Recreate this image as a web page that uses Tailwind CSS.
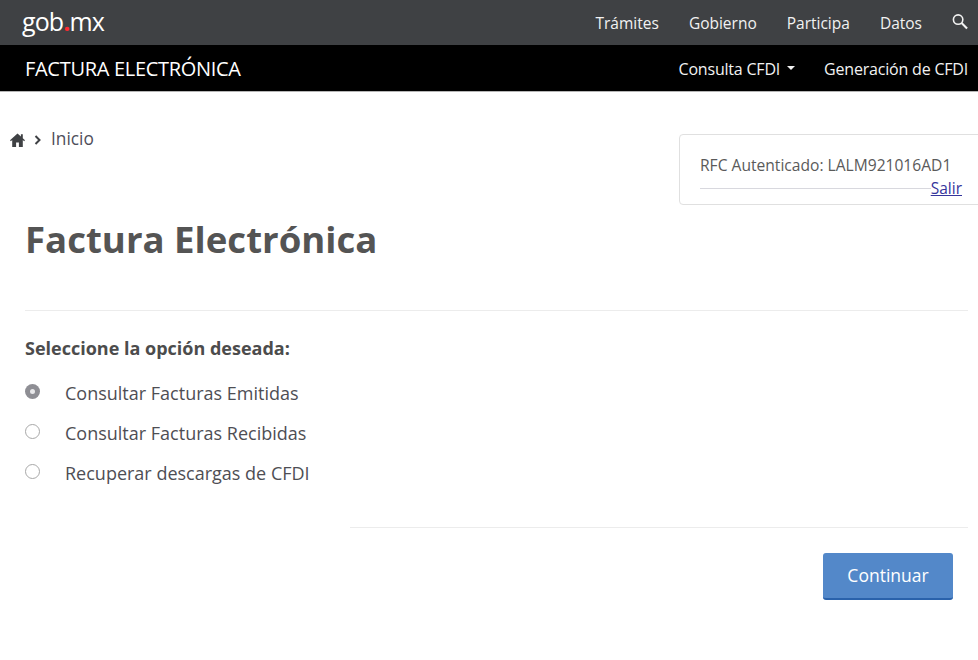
<!DOCTYPE html>
<html>
<head>
    <meta charset="utf-8" />
    <script src="https://cdn.jsdelivr.net/npm/@tailwindcss/browser@4"></script>
    <title>Factura Electrónica</title>
</head>
<body class="bg-white font-['Open_Sans',sans-serif] text-[#545454] overflow-hidden">
    <!-- gob.mx bar -->
    <div class="h-[45px] bg-[#3f4144] flex items-center justify-between pl-[22px] pr-[10px] text-white">
        <div class="text-[25px] leading-none font-normal tracking-[-0.9px] -mt-[2px]">gob<span class="text-[#ff2a30] font-bold">.</span>mx</div>
        <div class="flex items-center text-[15.5px] text-[#f2f2f2]">
            <a class="mr-[30px] mt-[2px]">Trámites</a>
            <a class="mr-[30px] mt-[2px]">Gobierno</a>
            <a class="mr-[30px] mt-[2px]">Participa</a>
            <a class="mr-[30px] mt-[2px]">Datos</a>
            <svg class="w-[16px] h-[17px] -mt-[3px]" viewBox="0 0 17 17" fill="none" stroke="#f2f2f2" stroke-width="1.7">
                <circle cx="6.5" cy="6.5" r="5" />
                <path d="M10.2 10.2L16 16" stroke-width="2.2" />
            </svg>
        </div>
    </div>

    <!-- black bar -->
    <div class="h-[47px] bg-black border-b border-[#b5b5b5] flex items-center justify-between pl-[25px] pr-[10px] pt-[2px] text-white">
        <div class="text-[20px] tracking-[-0.3px]">FACTURA ELECTRÓNICA</div>
        <div class="flex items-center text-[16px] tracking-[-0.2px] text-[#f2f2f2]">
            <a>Consulta CFDI</a>
            <span class="ml-[7px] mr-[29px] mb-[3px] w-0 h-0 border-x-[4px] border-x-transparent border-t-[4px] border-t-[#f2f2f2]"></span>
            <a>Generación de CFDI</a>
        </div>
    </div>

    <!-- breadcrumb and session panel -->
    <div class="flex items-start justify-between pl-[10px] pt-[42px]">
        <div class="flex items-center h-[30px] -mt-[10px]">
            <svg class="w-[15px] h-[14px] mt-[2px]" viewBox="0 0 15 14" fill="#3f4144">
                <path d="M7.5 0.5L0 7.2l0.9 1L2.2 7.1V14h3.9V9.4h2.8V14h3.9V7.1l1.3 1.1 0.9-1-2.2-2V1.2h-1.9v2.3z" />
            </svg>
            <svg class="w-[7px] h-[10px] ml-[9px] mt-[2px]" viewBox="0 0 7 10" fill="none" stroke="#3f4144" stroke-width="2">
                <path d="M1.5 1l4 4-4 4" />
            </svg>
            <span class="ml-[10px] text-[17.3px] text-[#4e4e5a]">Inicio</span>
        </div>
        <div class="w-[310px] h-[71px] -mr-[11px] border border-[#e0e0e0] rounded-[4px] pl-[20px] pr-[26px] pt-[19px]">
            <div class="text-[15.6px] leading-[22px] text-[#5a5a5a] whitespace-nowrap">RFC Autenticado: LALM921016AD1</div>
            <div class="flex items-center h-[22px] mt-[1px]">
                <div class="flex-1 border-t border-[#d8d8de]"></div>
                <a class="text-[15.5px] leading-[20px] text-[#35359c] underline">Salir</a>
            </div>
        </div>
    </div>

    <!-- page content -->
    <div class="pl-[25px] pr-[10px]">
        <h1 class="mt-[8px] text-[36.6px] leading-[52px] font-bold text-[#545454]">Factura Electrónica</h1>
        <div class="mt-[45px] border-t border-[#ececec]"></div>
        <div class="mt-[25px] text-[18px] leading-[24px] font-bold text-[#4c4c4c]">Seleccione la opción deseada:</div>

        <div class="mt-[13px] flex flex-col">
            <label class="flex items-center h-[40px] text-[18px] text-[#4e4e54]">
                <span class="w-[15px] h-[15px] -mt-[4px] mr-[25px] rounded-full bg-[#8e8e94] flex items-center justify-center">
                    <span class="w-[5px] h-[5px] rounded-full bg-[#e8e8ea]"></span>
                </span>
                Consultar Facturas Emitidas
            </label>
            <label class="flex items-center h-[40px] text-[18px] text-[#4e4e54]">
                <span class="w-[15px] h-[15px] -mt-[4px] mr-[25px] rounded-full bg-white border border-[#a8a8a8]"></span>
                Consultar Facturas Recibidas
            </label>
            <label class="flex items-center h-[40px] text-[18px] text-[#4e4e54]">
                <span class="w-[15px] h-[15px] -mt-[4px] mr-[25px] rounded-full bg-white border border-[#a8a8a8]"></span>
                Recuperar descargas de CFDI
            </label>
        </div>

        <div class="mt-[34px] ml-[325px] border-t border-[#ececec]"></div>
        <div class="mt-[25px] flex justify-end pr-[15px]">
            <button class="w-[130px] h-[47px] bg-[#5388c9] border-b-2 border-[#2a62ab] rounded-[3px] text-white text-[17.5px]">Continuar</button>
        </div>
    </div>
</body>
</html>
